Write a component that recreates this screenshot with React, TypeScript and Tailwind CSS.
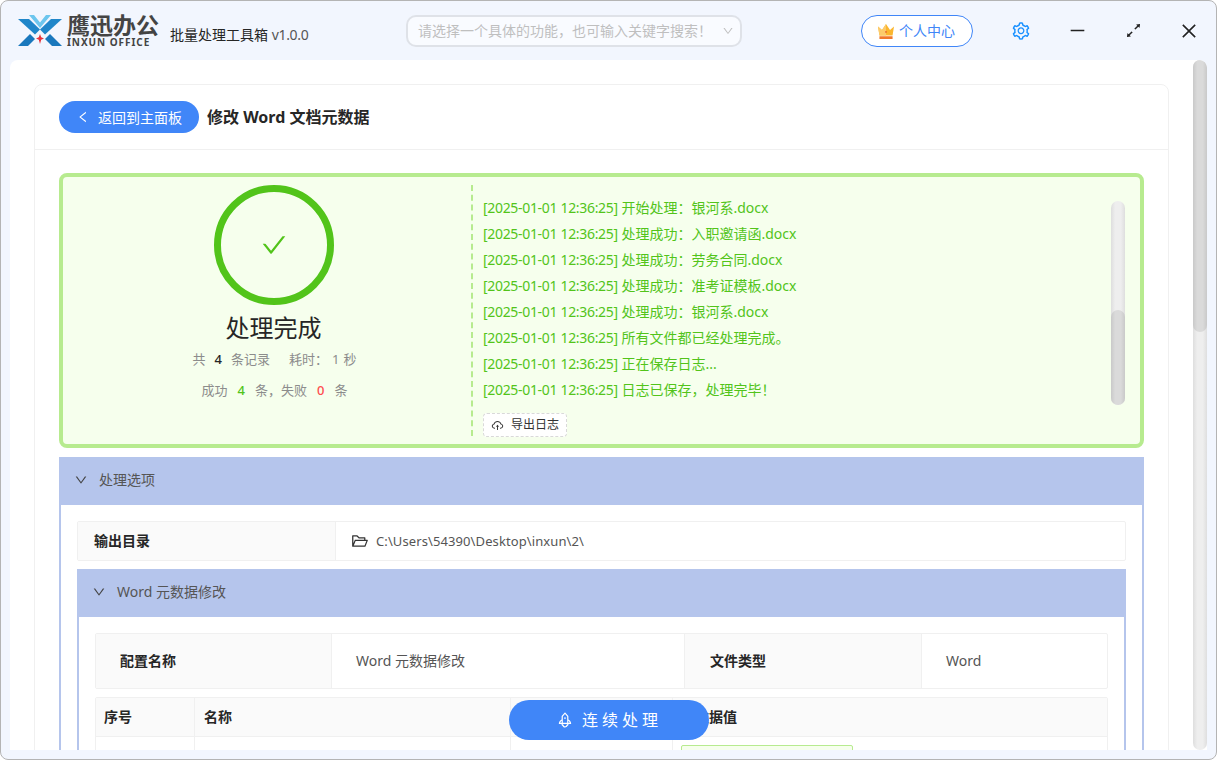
import {
  AiOutlineArrowsAlt,
  AiOutlineCheck,
  AiOutlineClose,
  AiOutlineCloudUpload,
  AiOutlineDown,
  AiOutlineFolderOpen,
  AiOutlineLeft,
  AiOutlineMinus,
  AiOutlineRocket,
  AiOutlineSetting,
} from 'react-icons/ai'

const logs = [
  '开始处理：银河系.docx',
  '处理成功：入职邀请函.docx',
  '处理成功：劳务合同.docx',
  '处理成功：准考证模板.docx',
  '处理成功：银河系.docx',
  '所有文件都已经处理完成。',
  '正在保存日志...',
  '日志已保存，处理完毕！',
]

function Logo() {
  return (
    <svg viewBox="0 0 44 31" className="h-[31px] w-[44px] shrink-0">
      <path d="M0 4h11l11 10.5-5 5z" fill="#1f86c9" />
      <path d="M44 4H33L22 14.5l5 5z" fill="#1f86c9" />
      <path d="M11 0h5l6 7.5L28 0h5L22 13z" fill="#6cc6ee" />
      <path d="M0 31l12-12 5 5-7 7z" fill="#1a78bd" />
      <path d="M44 31L32 19l-5 5 7 7z" fill="#1a78bd" />
      <path d="M22 19l1.2 3.3L26 23.5l-2.8 1.2L22 29l-1.2-4.3L18 23.5l2.8-1.2z" fill="#e8343c" />
    </svg>
  )
}

function Crown() {
  return (
    <svg viewBox="0 0 20 18" className="h-[16px] w-[18px] shrink-0">
      <path d="M1 4l4.5 4L10 1l4.5 7L19 4l-1.6 10H2.6z" fill="#fbb62e" />
      <path d="M1 4l4.5 4L10 1v13H2.6z" fill="#fccb6b" />
      <path d="M2.6 15h14.8v3H2.6z" fill="#f0782c" />
      <circle cx="10" cy="10" r="1" fill="#e8632c" />
    </svg>
  )
}

function Header() {
  return (
    <div className="flex h-[59px] shrink-0 items-center pl-[17px] text-[14px]">
      <Logo />
      <div className="ml-[5px] flex w-[97px] flex-col">
        <span className="text-[23px] leading-[23px] font-semibold whitespace-nowrap text-[#444]">鹰迅办公</span>
        <span className="text-[10px] leading-[10px] font-bold tracking-[0.95px] whitespace-nowrap text-[#444]">INXUN OFFICE</span>
      </div>
      <span className="mt-[7px] ml-[6px] w-[236px] whitespace-nowrap text-[#262626]">
        批量处理工具箱 <span className="tracking-[-0.3px] text-[#555]">v1.0.0</span>
      </span>
      <div className="flex h-[32px] w-[336px] items-center justify-between rounded-[10px] border-2 border-[#dfe2e8] bg-[#f9fbff] pr-[6px] pl-[10px] text-[#bfbfbf]">
        <span className="whitespace-nowrap">请选择一个具体的功能，也可输入关键字搜索！</span>
        <AiOutlineDown className="h-[12px] w-[12px]" />
      </div>
      <div className="ml-[119px] flex h-[32px] w-[112px] items-center gap-[4px] rounded-full border border-[#4086f8] bg-white pl-[15px] text-[#4086f8]">
        <Crown />
        <span className="whitespace-nowrap">个人中心</span>
      </div>
      <AiOutlineSetting className="ml-[38px] h-[20px] w-[20px] text-[#1890ff]" />
      <AiOutlineMinus className="ml-[37px] h-[19px] w-[19px] text-[#222]" />
      <AiOutlineArrowsAlt className="ml-[37px] h-[19px] w-[19px] text-[#222]" />
      <AiOutlineClose className="ml-[36px] h-[20px] w-[20px] text-[#222]" />
    </div>
  )
}

function SectionHead({ title }: { title: string }) {
  return (
    <div className="flex h-[48px] items-center gap-[11px] bg-[#b5c5ec] pb-[2px] pl-[15px] text-[14px] text-[#555]">
      <AiOutlineDown className="h-[14px] w-[14px] text-[#444]" />
      <span className="pb-[2px] whitespace-nowrap">{title}</span>
    </div>
  )
}

function ResultPanel() {
  return (
    <div className="flex h-[275px] rounded-lg border-4 border-[#b7eb8f] bg-[#f6ffed] py-[8px]">
      <div className="flex w-[408px] shrink-0 flex-col items-center pl-[13px] text-[13px] text-[#8c8c8c]">
        <div className="flex h-[120px] w-[120px] items-center justify-center rounded-full border-[7px] border-[#52c41a]">
          <AiOutlineCheck className="h-[28px] w-[28px] text-[#52c41a]" />
        </div>
        <div className="mt-[5px] text-[24px] leading-[36px] text-[#262626]">处理完成</div>
        <div className="mt-[4px] ml-[2px] flex h-[20px] items-center whitespace-nowrap">
          共<b className="mx-[9px] font-medium text-[#262626]">4</b>条记录
          <span className="ml-[19px]">耗时：</span>
          <span className="mx-[4px]">1</span>秒
        </div>
        <div className="mt-[11px] ml-[2px] flex h-[20px] items-center whitespace-nowrap">
          成功<b className="mx-[10px] font-medium text-[#52c41a]">4</b>条，失败<b className="mx-[10px] font-medium text-[#ff4d4f]">0</b>条
        </div>
      </div>
      <div className="flex flex-1 justify-between border-l-2 border-dashed border-[#b7eb8f] pr-[15px] pl-[10px]">
        <div className="pt-[10px]">
          {logs.map((line, i) => (
            <div key={i} className="h-[26px] text-[14px] leading-[26px] whitespace-nowrap text-[#52c41a]">
              <span className="tracking-[-0.32px]">[2025-01-01 12:36:25]</span> {line}
            </div>
          ))}
          <button className="mt-[10px] flex h-[24px] w-[84px] items-center gap-[7px] rounded border border-dashed border-[#d9d9d9] bg-white pl-[7px] text-[12px] text-[#333]">
            <AiOutlineCloudUpload className="h-[13px] w-[13px]" />
            导出日志
          </button>
        </div>
        <div className="mt-[16px] flex h-[204px] w-[14px] flex-col justify-end rounded-full bg-[linear-gradient(90deg,#dedede,#eeeeee_30%,#eeeeee_70%,#dedede)]">
          <div className="h-[95px] rounded-full bg-[linear-gradient(90deg,#c9c9c9,#dadada_30%,#dadada_70%,#c9c9c9)]" />
        </div>
      </div>
    </div>
  )
}

function MetaTable() {
  return (
    <div className="grid h-[56px] grid-cols-[236px_353px_237px_1fr] rounded-[2px] border border-[#f0f0f0] text-[14px] leading-[54px]">
      <div className="border-r border-[#f0f0f0] bg-[#fafafa] pl-[24px] font-bold text-[#262626]">配置名称</div>
      <div className="border-r border-[#f0f0f0] pl-[24px] text-[#555]">Word 元数据修改</div>
      <div className="border-r border-[#f0f0f0] bg-[#fafafa] pl-[25px] font-bold text-[#262626]">文件类型</div>
      <div className="pl-[24px] text-[#555]">Word</div>
    </div>
  )
}

function FieldTable() {
  return (
    <div className="mt-[8px] rounded-[2px] border border-[#f0f0f0] text-[14px]">
      <div className="grid h-[39px] grid-cols-[99px_316px_162px_1fr] border-b border-[#f0f0f0] bg-[#fafafa] leading-[38px] font-bold text-[#262626]">
        <div className="border-r border-[#f0f0f0] pl-[8px]">序号</div>
        <div className="border-r border-[#f0f0f0] pl-[9px]">名称</div>
        <div className="border-r border-[#f0f0f0]" />
        <div className="pl-[8px]">元数据值</div>
      </div>
      <div className="grid h-[60px] grid-cols-[99px_316px_162px_1fr]">
        <div className="border-r border-[#f0f0f0]" />
        <div className="border-r border-[#f0f0f0]" />
        <div className="border-r border-[#f0f0f0]" />
        <div className="pt-[8px] pl-[8px]">
          <div className="h-[32px] w-[172px] rounded-[2px] border border-[#b7eb8f] bg-[#f6ffed]" />
        </div>
      </div>
    </div>
  )
}

function OptionsSection() {
  return (
    <div className="mt-[9px]">
      <SectionHead title="处理选项" />
      <div className="border-x-2 border-[#b5c5ec] p-[16px]">
        <div className="flex h-[40px] rounded-[2px] border border-[#f0f0f0] text-[14px] leading-[38px]">
          <div className="w-[258px] shrink-0 border-r border-[#f0f0f0] bg-[#fafafa] pl-[16px] font-bold text-[#262626]">输出目录</div>
          <div className="flex items-center gap-[7px] pl-[15px] text-[#555]">
            <AiOutlineFolderOpen className="h-[18px] w-[18px] text-[#333]" />
            <span className="text-[13px] tracking-[0.1px] whitespace-nowrap">C:\Users\54390\Desktop\inxun\2\</span>
          </div>
        </div>
        <div className="mt-[8px]">
          <SectionHead title="Word 元数据修改" />
          <div className="border-x-2 border-[#b5c5ec] p-[16px]">
            <MetaTable />
            <FieldTable />
          </div>
        </div>
      </div>
    </div>
  )
}

function Scrollbar() {
  return (
    <div className="h-full w-[14px] shrink-0 rounded-full bg-[linear-gradient(90deg,#dedede,#eeeeee_30%,#eeeeee_70%,#dedede)]">
      <div className="h-[272px] rounded-full bg-[linear-gradient(90deg,#c9c9c9,#dadada_30%,#dadada_70%,#c9c9c9)]" />
    </div>
  )
}

export default function App() {
  return (
    <div className="relative flex h-[760px] w-[1217px] flex-col overflow-hidden rounded-lg border border-[#b4b4b4] bg-[#f2f6fe] font-['Noto_Sans','Noto_Sans_CJK_SC',sans-serif]">
      <Header />
      <div className="mr-[9px] ml-[9px] flex h-[690px] shrink-0 overflow-hidden rounded-t-lg bg-white">
        <div className="flex-1 overflow-hidden pt-[24px] pl-[24px]">
          <div className="w-[1135px] rounded-t-lg border border-[#f0f0f0]">
            <div className="flex h-[65px] items-center gap-[8px] border-b border-[#f0f0f0] pl-[24px]">
              <button className="flex h-[32px] w-[140px] items-center gap-[8px] rounded-full bg-[#4086f8] pl-[17px] text-[14px] text-white">
                <AiOutlineLeft className="h-[14px] w-[14px]" />
                返回到主面板
              </button>
              <h1 className="text-[16px] font-bold text-[#262626]">修改 Word 文档元数据</h1>
            </div>
            <div className="px-[24px] pt-[23px]">
              <ResultPanel />
              <OptionsSection />
            </div>
          </div>
        </div>
        <Scrollbar />
      </div>
      <button className="absolute top-[699px] left-[508px] flex h-[40px] w-[200px] items-center justify-center gap-[8px] rounded-full bg-[#4086f8] text-[16px] tracking-[4px] text-white">
        <AiOutlineRocket className="h-[18px] w-[18px]" />
        连续处理
      </button>
    </div>
  )
}
